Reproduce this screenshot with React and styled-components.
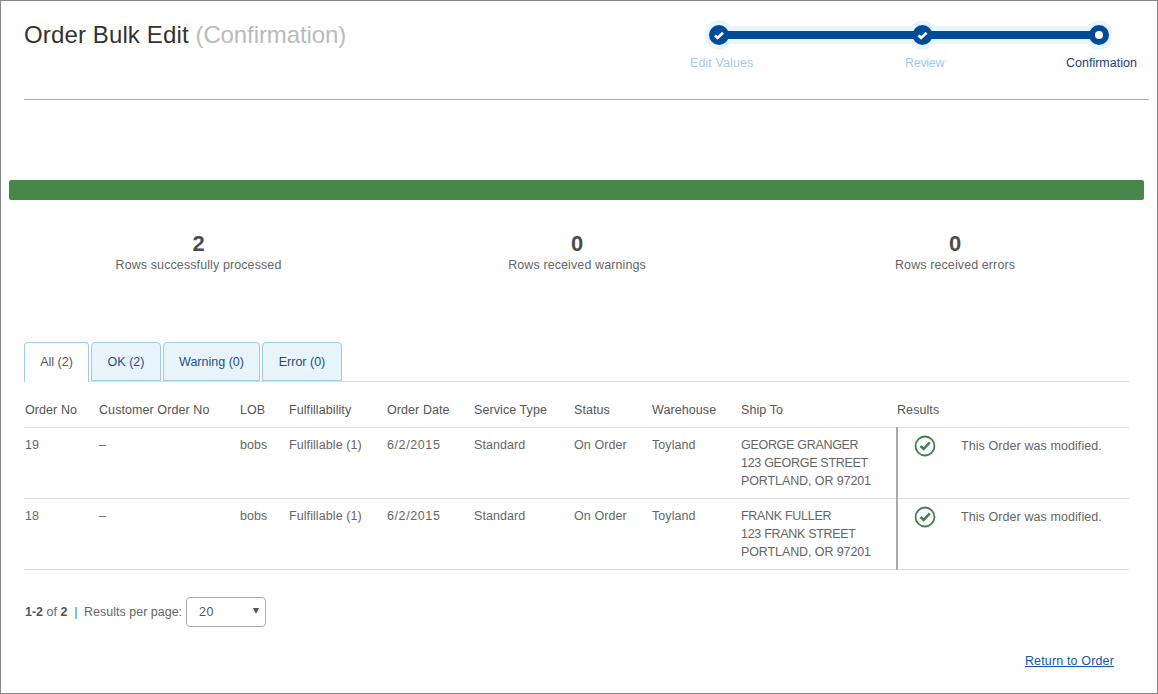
import React from "react";
import styled, { createGlobalStyle } from "styled-components";

const GlobalStyle = createGlobalStyle`
  html, body {
    margin: 0;
    padding: 0;
    background: #fff;
  }
  body {
    font-family: "Liberation Sans", Arial, sans-serif;
    font-size: 12px;
    color: #555;
  }
`;

const Frame = styled.div`
  box-sizing: border-box;
  width: 1158px;
  height: 694px;
  border: 1px solid #888;
  overflow: hidden;
`;

const Header = styled.header`
  display: flex;
  justify-content: space-between;
  height: 98px;
  margin: 0 8px 0 23px;
  border-bottom: 1px solid #aaa;
`;

const Title = styled.h1`
  margin: 19px 0 0;
  font-size: 24px;
  line-height: 30px;
  font-weight: 400;
  letter-spacing: 0.13px;
  color: #333;
`;

const TitleNote = styled.span`
  letter-spacing: -0.1px;
  color: #bbb;
`;

const Stepper = styled.div`
  width: 472px;
  padding-top: 18px;
`;

const StepTrack = styled.svg`
  display: block;
  width: 408px;
  height: 32px;
  margin-left: 27px;
`;

const StepLabels = styled.div`
  display: grid;
  grid-template-columns: 215px 161px 1fr;
  margin-top: 5px;
  padding-left: 13px;
`;

const StepLabel = styled.div`
  font-size: 12.5px;
  line-height: 14px;
  letter-spacing: ${(props) => props.$spacing || 0}px;
  white-space: nowrap;
  color: ${(props) => (props.$active ? "#1d3f72" : "#a3cbee")};
`;

const ProgressBar = styled.div`
  height: 20px;
  margin: 80px 13px 0 8px;
  background: #48874a;
  border-radius: 2px;
`;

const Summary = styled.section`
  display: grid;
  grid-template-columns: 379px 378px 378px;
  margin: 32px 0 0 8px;
  text-align: center;
`;

const SummaryValue = styled.div`
  font-size: 22px;
  line-height: 24px;
  font-weight: 700;
  color: #4d4d4d;
`;

const SummaryLabel = styled.div`
  font-size: 12.5px;
  line-height: 18px;
  letter-spacing: 0.1px;
  color: #666;
`;

const Tabs = styled.nav`
  display: flex;
  gap: 2px;
  height: 39px;
  margin: 68px 28px 0 23px;
  border-bottom: 1px solid #ddd;
`;

const Tab = styled.div`
  box-sizing: border-box;
  width: ${(props) => props.$width}px;
  height: ${(props) => (props.$active ? 40 : 39)}px;
  border: 1px solid #9ccbec;
  border-bottom: ${(props) => (props.$active ? "none" : "1px solid #9ccbec")};
  border-radius: 4px 4px 0 0;
  background: ${(props) => (props.$active ? "#fff" : "#e9f5fe")};
  color: ${(props) => (props.$active ? "#555" : "#1d4f86")};
  font-size: 12.5px;
  line-height: 38px;
  text-align: center;
`;

const Table = styled.table`
  width: 1105px;
  margin-left: 23px;
  border-collapse: collapse;
  table-layout: fixed;
  font-size: 12.5px;
  letter-spacing: 0.08px;
`;

const HeadCell = styled.th`
  box-sizing: border-box;
  height: 45px;
  padding: 0 0 10px 1px;
  vertical-align: bottom;
  font-weight: 400;
  text-align: left;
  color: #555;
  white-space: nowrap;

  &:last-child {
    padding-left: 0;
  }
`;

const Row = styled.tr`
  border-top: 1px solid #ddd;
  border-bottom: 1px solid #ddd;
`;

const Cell = styled.td`
  box-sizing: border-box;
  height: 71px;
  padding: 8px 0 0 1px;
  vertical-align: top;
  line-height: 18px;
  color: #666;
  white-space: nowrap;
`;

const DateCell = styled(Cell)`
  letter-spacing: 0.6px;
`;

const ShipLine = styled.div`
  letter-spacing: -0.3px;

  &:last-child {
    letter-spacing: -0.1px;
  }
`;

const ResultCell = styled(Cell)`
  border-left: 2px solid #aaa;
  padding: 0;
`;

const ResultBody = styled.div`
  display: flex;
  align-items: flex-start;
  gap: 25px;
  padding: 7px 0 0 16px;
`;

const ResultText = styled.span`
  line-height: 22px;
  color: #666;
`;

const Pager = styled.div`
  display: flex;
  align-items: center;
  height: 30px;
  margin: 27px 0 0 24px;
  color: #666;
`;

const PagerText = styled.span`
  font-size: 12.5px;
  white-space: pre;
`;

const PagerStrong = styled.strong`
  color: #555;
`;

const PagerBar = styled.span`
  margin-right: 3px;
  color: #3b78b0;
`;

const PageSize = styled.div`
  box-sizing: border-box;
  display: flex;
  justify-content: space-between;
  align-items: center;
  width: 80px;
  height: 30px;
  margin-left: 4px;
  padding: 0 6px 0 12px;
  border: 1px solid #aaa;
  border-radius: 4px;
  font-size: 12.5px;
  letter-spacing: 0.5px;
  color: #555;
`;

const Caret = styled.span`
  width: 0;
  height: 0;
  margin-top: -2px;
  border-left: 3px solid transparent;
  border-right: 3px solid transparent;
  border-top: 6px solid #555;
`;

const Footer = styled.div`
  display: flex;
  justify-content: flex-end;
  margin: 27px 43px 0 0;
`;

const ReturnLink = styled.a`
  font-size: 12.5px;
  letter-spacing: 0.15px;
  color: #0b5ca8;
  text-decoration: underline;
`;

const Check = ({ x }) => (
  <g>
    <circle cx={x} cy="16" r="10" fill="#004b97" />
    <path
      d={`M${x - 4} 16.5l2.6 2.4 5.4-5.2`}
      fill="none"
      stroke="#fff"
      strokeWidth="2.8"
    />
  </g>
);

const StepGraphic = () => (
  <StepTrack viewBox="0 0 408 32">
    <rect x="14" y="7" width="380" height="18" fill="#e9f5fe" />
    <circle cx="15" cy="16" r="14.5" fill="#e9f5fe" />
    <circle cx="218.5" cy="16" r="14.5" fill="#e9f5fe" />
    <circle cx="395" cy="16" r="14.5" fill="#e9f5fe" />
    <rect x="15" y="12" width="380" height="8" fill="#004b97" />
    <Check x={15} />
    <Check x={218.5} />
    <circle cx="395" cy="16" r="10" fill="#004b97" />
    <circle cx="395" cy="16" r="4" fill="#fff" />
  </StepTrack>
);

const ResultIcon = () => (
  <svg width="22" height="22" viewBox="0 0 22 22">
    <circle cx="11" cy="11" r="9.5" fill="none" stroke="#43804f" strokeWidth="1.8" />
    <path d="M6.5 11l3.2 3 6-6.6" fill="none" stroke="#43804f" strokeWidth="2.6" />
  </svg>
);

const columns = [
  ["Order No", 74],
  ["Customer Order No", 141],
  ["LOB", 49],
  ["Fulfillability", 98],
  ["Order Date", 87],
  ["Service Type", 100],
  ["Status", 78],
  ["Warehouse", 89],
  ["Ship To", 157],
  ["Results", 232],
];

const rows = [
  { id: 19, ship: ["GEORGE GRANGER", "123 GEORGE STREET", "PORTLAND, OR 97201"] },
  { id: 18, ship: ["FRANK FULLER", "123 FRANK STREET", "PORTLAND, OR 97201"] },
];

const tabs = [
  ["All (2)", 65, true],
  ["OK (2)", 70],
  ["Warning (0)", 97],
  ["Error (0)", 80],
];

const summary = [
  ["2", "Rows successfully processed"],
  ["0", "Rows received warnings"],
  ["0", "Rows received errors"],
];

export default function App() {
  return (
    <Frame>
      <GlobalStyle />
      <Header>
        <Title>
          Order Bulk Edit <TitleNote>(Confirmation)</TitleNote>
        </Title>
        <Stepper>
          <StepGraphic />
          <StepLabels>
            <StepLabel $spacing={0.1}>Edit Values</StepLabel>
            <StepLabel $spacing={-0.3}>Review</StepLabel>
            <StepLabel $active>Confirmation</StepLabel>
          </StepLabels>
        </Stepper>
      </Header>

      <ProgressBar />

      <Summary>
        {summary.map(([value, label]) => (
          <div key={label}>
            <SummaryValue>{value}</SummaryValue>
            <SummaryLabel>{label}</SummaryLabel>
          </div>
        ))}
      </Summary>

      <Tabs>
        {tabs.map(([label, width, active]) => (
          <Tab key={label} $width={width} $active={active}>
            {label}
          </Tab>
        ))}
      </Tabs>

      <Table>
        <colgroup>
          {columns.map(([name, width]) => (
            <col key={name} width={width} />
          ))}
        </colgroup>
        <thead>
          <tr>
            {columns.map(([name]) => (
              <HeadCell key={name}>{name}</HeadCell>
            ))}
          </tr>
        </thead>
        <tbody>
          {rows.map((row) => (
            <Row key={row.id}>
              <Cell>{row.id}</Cell>
              <Cell>–</Cell>
              <Cell>bobs</Cell>
              <Cell>Fulfillable (1)</Cell>
              <DateCell>6/2/2015</DateCell>
              <Cell>Standard</Cell>
              <Cell>On Order</Cell>
              <Cell>Toyland</Cell>
              <Cell>
                {row.ship.map((line) => (
                  <ShipLine key={line}>{line}</ShipLine>
                ))}
              </Cell>
              <ResultCell>
                <ResultBody>
                  <ResultIcon />
                  <ResultText>This Order was modified.</ResultText>
                </ResultBody>
              </ResultCell>
            </Row>
          ))}
        </tbody>
      </Table>

      <Pager>
        <PagerText>
          <PagerStrong>1-2</PagerStrong> of <PagerStrong>2</PagerStrong>  <PagerBar>|</PagerBar> Results per page:
        </PagerText>
        <PageSize>
          20
          <Caret />
        </PageSize>
      </Pager>

      <Footer>
        <ReturnLink href="#">Return to Order</ReturnLink>
      </Footer>
    </Frame>
  );
}
